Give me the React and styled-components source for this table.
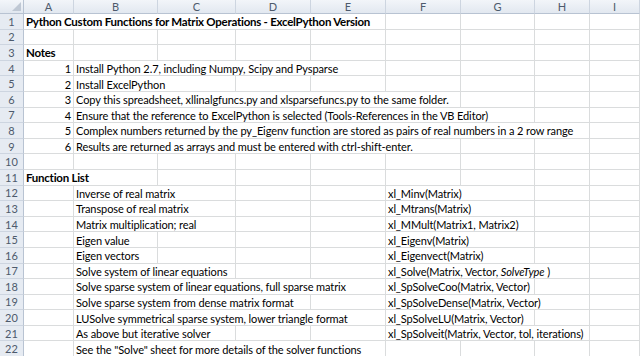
import React from 'react';
import styled, { createGlobalStyle } from 'styled-components';

const GlobalStyle = createGlobalStyle`
  html, body {
    margin: 0;
    padding: 0;
    background: #ffffff;
    overflow: hidden;
  }
  body {
    font-family: Lato, "Liberation Sans", sans-serif;
  }
`;

const COLS = ['A', 'B', 'C', 'D', 'E', 'F', 'G', 'H', 'I'];

const Sheet = styled.div`
  display: grid;
  grid-template-columns: 24px 50px 84px 78px 75px 75px 75px 74px 55px 50px;
  grid-template-rows: 14px repeat(22, 15.6px);
  width: 640px;
  height: 356px;
  overflow: hidden;
  color: #000;
`;

const Corner = styled.div`
  display: flex;
  align-items: flex-end;
  justify-content: flex-end;
  padding: 0 2px 2px 0;
  background: linear-gradient(#f3f6fa, #e1e7ef);
  border-right: 1px solid #b8c3d2;
  border-bottom: 1px solid #b8c3d2;
  box-sizing: border-box;
`;

const ColHeader = styled.div`
  display: flex;
  align-items: center;
  justify-content: center;
  background: linear-gradient(#f2f5f9, #e2e8f0);
  border-right: 1px solid #cdd5e0;
  border-bottom: 1px solid #b8c3d2;
  box-sizing: border-box;
  color: #4d5a6c;
  font-size: 11px;
`;

const RowHeader = styled.div`
  display: flex;
  align-items: center;
  justify-content: center;
  background: #e6ebf2;
  border-right: 1px solid #b8c3d2;
  border-bottom: 1px solid #cdd5e0;
  box-sizing: border-box;
  color: #4d5a6c;
  font-size: 11px;
`;

const Cell = styled.div`
  grid-column: span ${(p) => p.$span || 1};
  display: flex;
  align-items: center;
  justify-content: ${(p) => (p.$right ? 'flex-end' : 'flex-start')};
  padding: 1px 2px 0 2px;
  border-right: 1px solid #dadcdd;
  border-bottom: 1px solid #dadcdd;
  box-sizing: border-box;
  white-space: pre;
  overflow: visible;
  font-size: ${(p) => (p.$bold ? '11.5px' : '11px')};
  font-weight: ${(p) => (p.$bold ? 700 : 400)};
  letter-spacing: ${(p) => (p.$bold ? '-0.25px' : '-0.1px')};
`;

const Text = styled.span``;

const Em = styled.span`
  font-style: italic;
`;

// each row: list of [column index, span, content, options]
const rows = [
  [[0, 5, 'Python Custom Functions for Matrix Operations - ExcelPython Version', { bold: true }]],
  [],
  [[0, 1, 'Notes', { bold: true }]],
  [[0, 1, '1', { right: true }], [1, 4, 'Install Python 2.7, including Numpy, Scipy and Pysparse']],
  [[0, 1, '2', { right: true }], [1, 2, 'Install ExcelPython']],
  [[0, 1, '3', { right: true }], [1, 5, 'Copy this spreadsheet, xllinalgfuncs.py and xlsparsefuncs.py to the same folder.']],
  [[0, 1, '4', { right: true }], [1, 6, 'Ensure that the reference to ExcelPython is selected (Tools-References in the VB Editor)']],
  [[0, 1, '5', { right: true }], [1, 7, 'Complex numbers returned by the py_Eigenv function are stored as pairs of real numbers in a 2 row range']],
  [[0, 1, '6', { right: true }], [1, 5, 'Results are returned as arrays and must be entered with ctrl-shift-enter.']],
  [],
  [[0, 2, 'Function List', { bold: true }]],
  [[1, 2, 'Inverse of real matrix'], [5, 2, 'xl_Minv(Matrix)']],
  [[1, 2, 'Transpose of real matrix'], [5, 2, 'xl_Mtrans(Matrix)']],
  [[1, 2, 'Matrix multiplication; real'], [5, 2, 'xl_MMult(Matrix1, Matrix2)']],
  [[1, 1, 'Eigen value'], [5, 2, 'xl_Eigenv(Matrix)']],
  [[1, 1, 'Eigen vectors'], [5, 2, 'xl_Eigenvect(Matrix)']],
  [
    [1, 2, 'Solve system of linear equations'],
    [5, 3, <>xl_Solve(Matrix, Vector, <Em>SolveType</Em> )</>],
  ],
  [[1, 4, 'Solve sparse system of linear equations, full sparse matrix'], [5, 2, 'xl_SpSolveCoo(Matrix, Vector)']],
  [[1, 3, 'Solve sparse system from dense matrix format'], [5, 3, 'xl_SpSolveDense(Matrix, Vector)']],
  [[1, 4, 'LUSolve symmetrical sparse system, lower triangle format'], [5, 2, 'xl_SpSolveLU(Matrix, Vector)']],
  [[1, 2, 'As above but iterative solver'], [5, 3, 'xl_SpSolveit(Matrix, Vector, tol, iterations)']],
  [[1, 4, 'See the "Solve" sheet for more details of the solver functions']],
];

const buildRow = (cells, r) => {
  const out = [];
  const byCol = {};
  cells.forEach((cell) => {
    byCol[cell[0]] = cell;
  });
  let c = 0;
  while (c < COLS.length) {
    const cell = byCol[c];
    if (cell) {
      const [, span, content, opts = {}] = cell;
      out.push(
        <Cell key={`${r}-${c}`} $span={span} $bold={opts.bold} $right={opts.right}>
          <Text>{content}</Text>
        </Cell>
      );
      c += span;
    } else {
      out.push(<Cell key={`${r}-${c}`} />);
      c += 1;
    }
  }
  return out;
};

export default function App() {
  return (
    <>
      <GlobalStyle />
      <Sheet>
        <Corner>
          <svg width="9" height="9" viewBox="0 0 9 9">
            <polygon points="9,0 9,9 0,9" fill="#bfc8d4" />
          </svg>
        </Corner>
        {COLS.map((col) => (
          <ColHeader key={col}>{col}</ColHeader>
        ))}
        {rows.map((cells, r) => (
          <React.Fragment key={r}>
            <RowHeader>{r + 1}</RowHeader>
            {buildRow(cells, r)}
          </React.Fragment>
        ))}
      </Sheet>
    </>
  );
}
